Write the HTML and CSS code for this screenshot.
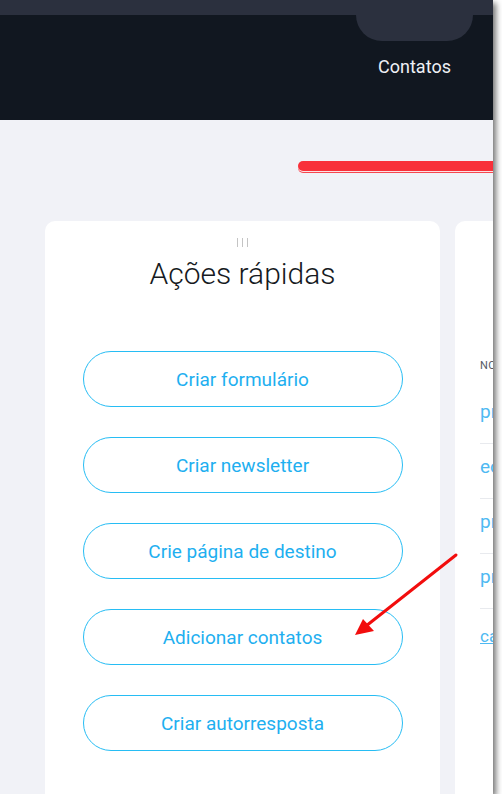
FILE: index.html
```html
<!DOCTYPE html>
<html lang="pt">
<head>
    <meta charset="UTF-8">
    <meta name="viewport" content="width=device-width, initial-scale=1.0">
    <title>Ações rápidas</title>
    <link rel="stylesheet" href="styles.css">
</head>
<body>

    <div class="frame">
        <header class="topbar">
            <nav class="nav-item">
                <div class="nav-tab"></div>
                <span class="nav-label">Contatos</span>
            </nav>
        </header>

        <main class="content">
            <div class="progress"></div>

            <div class="cards">
                <section class="card quick">
                    <div class="handle"><i></i><i></i><i></i></div>
                    <h2>Ações rápidas</h2>
                    <div class="actions">
                        <button type="button">Criar formulário</button>
                        <button type="button">Criar newsletter</button>
                        <button type="button">Crie página de destino</button>
                        <button type="button">Adicionar contatos</button>
                        <button type="button">Criar autorresposta</button>
                    </div>
                </section>

                <section class="card lists">
                    <div class="col-title">Nome</div>
                    <ul>
                        <li><a href="#">principal</a></li>
                        <li><a href="#">ecommerce</a></li>
                        <li><a href="#">promoções</a></li>
                        <li><a href="#">produtos</a></li>
                    </ul>
                    <a class="more" href="#">carregar mais</a>
                </section>
            </div>

            <!-- seta de anotação -->
            <svg class="arrow" width="493" height="794" viewBox="0 0 493 794">
                <line x1="456" y1="555" x2="366" y2="626" stroke="#f20d0d" stroke-width="3" stroke-linecap="round"/>
                <polygon points="355,635 363,619 374,631" fill="#f20d0d"/>
            </svg>
        </main>
    </div>

</body>
</html>
```

FILE: styles.css
```css
/* base */
body {
    margin: 0;
    background-color: #fff;
    font-family: Roboto, "Liberation Sans", Arial, sans-serif;
}

.frame {
    position: relative;
    width: 493px;
    height: 794px;
    overflow: hidden;
    background-color: #f1f2f7;
    box-shadow: 3px 3px 6px rgba(0, 0, 0, 0.55);
}

/* topo */
.topbar {
    height: 120px;
    display: flex;
    justify-content: flex-end;
    padding-right: 20px;
    background: linear-gradient(#2b303e 15px, #111720 15px);
}

.nav-item {
    width: 117px;
    display: flex;
    flex-direction: column;
    align-items: center;
}

.nav-tab {
    width: 117px;
    height: 41px;
    background-color: #2b303e;
    border-radius: 0 0 26px 26px;
}

.nav-label {
    margin-top: 15px;
    color: #eef0f5;
    font-size: 18px;
    line-height: 21px;
}

/* conteudo */
.content {
    padding-top: 41px;
}

.progress {
    height: 10px;
    margin-left: 298px;
    margin-right: -20px;
    background-color: #f8303a;
    border-radius: 6px 0 0 6px;
    box-shadow: 0 1px 0 #fbe3e4, 0 2px 0 #f6474f;
}

.cards {
    display: flex;
    gap: 15px;
    margin-top: 50px;
    padding-left: 45px;
}

.card {
    background-color: #fff;
    border-radius: 10px;
    height: 640px;
}

.quick {
    flex: 0 0 395px;
    padding-top: 17px;
    text-align: center;
}

.handle {
    display: flex;
    justify-content: center;
    gap: 4px;
    height: 9px;
}

.handle i {
    width: 1px;
    height: 9px;
    background-color: #c4c4c4;
}

.quick h2 {
    margin: 9px 0 0;
    font-size: 30px;
    font-weight: 300;
    line-height: 35px;
    color: #161a22;
}

.actions {
    display: flex;
    flex-direction: column;
    align-items: center;
    gap: 30px;
    margin-top: 60px;
}

.actions button {
    width: 320px;
    height: 56px;
    border: 1px solid #27bdf4;
    border-radius: 28px;
    background-color: #fff;
    color: #1eaff0;
    font-family: inherit;
    font-size: 19px;
    cursor: pointer;
}

/* lista da direita */
.lists {
    flex: 0 0 300px;
    padding: 138px 0 0 25px;
}

.col-title {
    font-size: 11px;
    letter-spacing: 0.5px;
    text-transform: uppercase;
    color: #555a63;
    line-height: 13px;
}

.lists ul {
    list-style: none;
    margin: 17px 0 0;
    padding: 0;
}

.lists li {
    height: 54px;
    border-bottom: 1px solid #e8eaee;
    display: flex;
    align-items: center;
}

.lists li a {
    color: #4eb9f2;
    font-size: 19px;
    text-decoration: none;
    margin-top: -9px;
}

.more {
    display: inline-block;
    margin-top: 17px;
    color: #4eb9f2;
    font-size: 17px;
}

.arrow {
    position: absolute;
    left: 0;
    top: 0;
    pointer-events: none;
}
```
